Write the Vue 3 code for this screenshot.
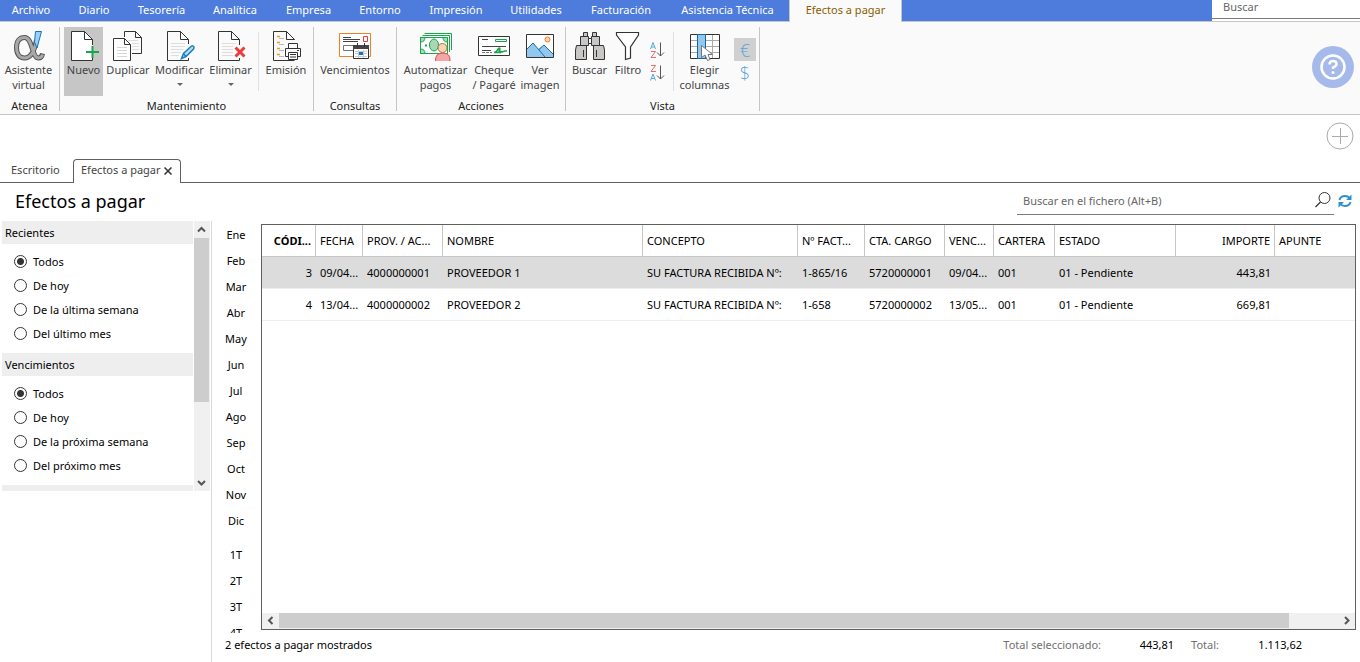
<script setup>
import { ref } from 'vue'

const menus = ['Archivo', 'Diario', 'Tesorería', 'Analítica', 'Empresa', 'Entorno', 'Impresión', 'Utilidades', 'Facturación', 'Asistencia Técnica', 'Efectos a pagar']
const activeMenu = ref('Efectos a pagar')

const filters = [
  { id: 'recientes', title: 'Recientes', options: ['Todos', 'De hoy', 'De la última semana', 'Del último mes'] },
  { id: 'vencimientos', title: 'Vencimientos', options: ['Todos', 'De hoy', 'De la próxima semana', 'Del próximo mes'] }
]
const selected = ref({ recientes: 'Todos', vencimientos: 'Todos' })

const months = ['Ene', 'Feb', 'Mar', 'Abr', 'May', 'Jun', 'Jul', 'Ago', 'Sep', 'Oct', 'Nov', 'Dic']
const quarters = ['1T', '2T', '3T', '4T']

const columns = [
  { key: 'codigo', label: 'CÓDI...' },
  { key: 'fecha', label: 'FECHA' },
  { key: 'prov', label: 'PROV. / AC...' },
  { key: 'nombre', label: 'NOMBRE' },
  { key: 'concepto', label: 'CONCEPTO' },
  { key: 'factura', label: 'Nº FACT...' },
  { key: 'cuenta', label: 'CTA. CARGO' },
  { key: 'venc', label: 'VENC...' },
  { key: 'cartera', label: 'CARTERA' },
  { key: 'estado', label: 'ESTADO' },
  { key: 'importe', label: 'IMPORTE' },
  { key: 'apunte', label: 'APUNTE' }
]
const rows = [
  { codigo: '3', fecha: '09/04...', prov: '4000000001', nombre: 'PROVEEDOR 1', concepto: 'SU FACTURA RECIBIDA Nº:', factura: '1-865/16', cuenta: '5720000001', venc: '09/04...', cartera: '001', estado: '01 - Pendiente', importe: '443,81', apunte: '' },
  { codigo: '4', fecha: '13/04...', prov: '4000000002', nombre: 'PROVEEDOR 2', concepto: 'SU FACTURA RECIBIDA Nº:', factura: '1-658', cuenta: '5720000002', venc: '13/05...', cartera: '001', estado: '01 - Pendiente', importe: '669,81', apunte: '' }
]
const selectedRow = ref('3')
</script>

<template>
  <div class="app">
    <header class="topbar">
      <nav class="menus">
        <button v-for="m in menus" :key="m" type="button" :class="{ active: m === activeMenu }" @click="activeMenu = m">{{ m }}</button>
      </nav>
      <div class="global-search">
        <input type="text" placeholder="Buscar" aria-label="Buscar">
      </div>
    </header>

    <section class="ribbon">
      <div class="group atenea">
        <div class="tools">
          <button type="button" class="tool">
            <svg width="32" height="32" viewBox="0 0 32 32">
              <g fill="none">
                <path d="M23.500 10C21.500 21 17.500 28 11.500 28C6.500 28 3.500 24 3.500 17.500C3.500 11 6.500 7.500 11.500 7.500C20 7.500 18.500 28 25.500 28C28 28 29 26.500 29.500 23.500" stroke="#555" stroke-width="5" />
                <path d="M23.500 11C21.500 21 17.500 28 11.500 28C6.500 28 3.500 24 3.500 17.500C3.500 11 6.500 7.500 11.500 7.500C20 7.500 18.500 28 25.500 28C28 28 29 26.500 29.500 24.500" stroke="#a8a8a8" stroke-width="3" />
              </g>
              <path d="M22.500 1.500H28.500L24 18L21.500 12Z" fill="#9ccff5" stroke="#1874b8" />
            </svg>
            <span>Asistente<br>virtual</span>
          </button>
        </div>
        <h2>Atenea</h2>
      </div>

      <div class="group mantenimiento">
        <div class="tools">
          <button type="button" class="tool pressed">
            <svg width="32" height="32" viewBox="0 0 32 32">
              <path d="M3.500 1.500H17L24.500 9V30.500H3.500Z" fill="#fff" />
              <path d="M24.500 15V9.500L16.500 1.500H3.500V30.500H24.500V28M16.500 1.500V9.500H24.500" fill="none" stroke="#333" />
              <path d="M24.500 16V28M18 22H31" stroke="#18a64a" stroke-width="2" />
            </svg>
            <span>Nuevo</span>
          </button>
          <button type="button" class="tool">
            <svg width="32" height="32" viewBox="0 0 32 32">
              <path d="M12.500 7V1.500H23.500L29.500 7.500V23.500H20M23.500 1.500V7.500H29.500" fill="none" stroke="#333" />
              <path d="M16 10.500H26M20 13.500H27M20 16.500H27M20 19.500H27" stroke="#ddd" />
              <path d="M1.500 8.500H12.500L18.500 14.500V30.500H1.500ZM12.500 8.500V14.500H18.500" fill="#fff" stroke="#333" />
              <path d="M5 17.500H15M5 20.500H15M5 23.500H15M5 26.500H15" stroke="#d6d6d6" />
            </svg>
            <span>Duplicar</span>
          </button>
          <button type="button" class="tool">
            <svg width="32" height="32" viewBox="0 0 32 32">
              <path d="M24.500 14V9.500L16.500 1.500H3.500V30.500H24.500V28M16.500 1.500V9.500H24.500" fill="none" stroke="#333" />
              <path d="M7 13.500H21M7 16.500H21M7 19.500H19M7 22.500H17M7 25.500H15" stroke="#ddd" />
              <path d="M17.500 28.500L19.500 23.500L27 16.500Q29 15 30 17Q30 18 29.500 19L22 26.500ZM19.500 23.500L22 26.500" fill="#b8dcf5" stroke="#1b80bd" stroke-width="1.500" />
            </svg>
            <span>Modificar</span>
            <i class="arrow"></i>
          </button>
          <button type="button" class="tool">
            <svg width="32" height="32" viewBox="0 0 32 32">
              <path d="M24.500 15V9.500L16.500 1.500H3.500V30.500H24.500V28M16.500 1.500V9.500H24.500" fill="none" stroke="#333" />
              <path d="M7 13.500H21M7 16.500H18M7 19.500H18M7 22.500H18M7 25.500H18" stroke="#ddd" />
              <path d="M20.500 17.500L29.500 26.500M29.500 17.500L20.500 26.500" stroke="#ee3a3a" stroke-width="3" />
            </svg>
            <span>Eliminar</span>
            <i class="arrow"></i>
          </button>
          <span class="divider"></span>
          <button type="button" class="tool">
            <svg width="32" height="32" viewBox="0 0 32 32">
              <path d="M24.500 10V9.500L16.500 1.500H3.500V30.500H24.500M16.500 1.500V9.500H24.500" fill="none" stroke="#333" />
              <path d="M7 6.500H10M7 12.500H10M7 18.500H10M7 24.500H10" stroke="#f39a1d" stroke-width="1.500" />
              <path d="M9 8.500H14M9 14.500H14M9 20.500H14M9 26.500H14" stroke="#bbb" />
              <path d="M18.500 18.500V13.500H27.500V18.500M18.500 26.500H15.500V18.500H30.500V26.500H27.500M18.500 22.500H27.500V29.500H18.500Z" fill="#fff" stroke="#333" />
              <path d="M20 24.500H26M20 27H26M27 20.500H29" stroke="#333" />
            </svg>
            <span>Emisión</span>
          </button>
        </div>
        <h2>Mantenimiento</h2>
      </div>

      <div class="group consultas">
        <div class="tools">
          <button type="button" class="tool">
            <svg width="34" height="32" viewBox="0 0 34 32">
              <path d="M1.500 3.500H32.500V26.500H1.500Z" fill="#fff" stroke="#ed8128" />
              <path d="M5 7.500H13M5 9.500H20M16 9.500H22M5 11.500H20" stroke="#444" />
              <path d="M25.500 6.500H29.500V11.500H25.500Z" fill="#fff" stroke="#e73c3c" />
              <path d="M5.500 15.500H15.500V20.500H5.500Z" fill="#fff" stroke="#777" />
              <path d="M15.500 15.500H30.500V28.500H15.500Z" fill="#fff" stroke="#333" />
              <path d="M15 15H31V19H15Z" fill="#444" />
              <path d="M19.500 13V17M26.500 13V17" stroke="#333" />
              <path d="M17 21.500H29M17 23.500H29M17 26.500H29M20.500 20V28M25.500 20V28" stroke="#ccc" />
              <path d="M21 22H25V25H21Z" fill="#1273c4" />
            </svg>
            <span>Vencimientos</span>
          </button>
        </div>
        <h2>Consultas</h2>
      </div>

      <div class="group acciones">
        <div class="tools">
          <button type="button" class="tool">
            <svg width="34" height="32" viewBox="0 0 34 32">
              <path d="M5.500 3.500H32.500V20M3.500 5.500H30.500V22M1.500 7.500H28.500V23.500H1.500Z" fill="#fff" stroke="#18a64a" />
              <path d="M1.500 7.500H6Q6 12 1.500 12ZM28.500 7.500H24Q24 12 28.500 12ZM1.500 23.500H6Q6 19 1.500 19Z" fill="#a9d8b5" stroke="#18a64a" />
              <ellipse cx="15" cy="15" rx="4.500" ry="6" fill="#a9d8b5" stroke="#18a64a" />
              <path d="M6 15.500H8" stroke="#18a64a" stroke-width="2" />
              <path d="M16.500 31Q16 23 24 23Q31.500 23 31 31" fill="#f4a5a5" stroke="#dd5050" />
              <circle cx="23.500" cy="18" r="4.500" fill="#f8d6b5" stroke="#a5753f" />
            </svg>
            <span>Automatizar<br>pagos</span>
          </button>
          <button type="button" class="tool">
            <svg width="34" height="32" viewBox="0 0 34 32">
              <path d="M1.500 6.500H32.500V25.500H1.500Z" fill="#fff" stroke="#333" />
              <path d="M5 9.500H11M5 16.500H29M5 20.500H14" stroke="#444" />
              <path d="M5 22.500H15" stroke="#777" stroke-dasharray="3 1" />
              <path d="M18.500 9.500H29.500V11.500H18.500Z" fill="#fff" stroke="#18a64a" />
              <path d="M17 22.500Q20 22 21 19Q23 17 23 19Q21 22 23 21L25 22L28 21H30M17 22.500H24" fill="none" stroke="#18a64a" stroke-width="1.500" />
            </svg>
            <span>Cheque<br>/ Pagaré</span>
          </button>
          <button type="button" class="tool">
            <svg width="32" height="32" viewBox="0 0 32 32">
              <path d="M2.500 4.500H29.500V27.500H2.500Z" fill="#fff" />
              <path d="M3 19L9 13L21 27H3ZM14 19L20 15L29 24V27H14Z" fill="#93c7ee" />
              <path d="M3 19L9 13L21 27M15 19.500L20 15L29 24" fill="none" stroke="#176ca9" />
              <circle cx="23.500" cy="9.500" r="2.500" fill="#ffd2a3" stroke="#ed8128" />
              <path d="M2.500 4.500H29.500V27.500H2.500Z" fill="none" stroke="#333" />
            </svg>
            <span>Ver<br>imagen</span>
          </button>
        </div>
        <h2>Acciones</h2>
      </div>

      <div class="group vista">
        <div class="tools">
          <button type="button" class="tool">
            <svg width="32" height="32" viewBox="0 0 32 32">
              <g fill="#c9c7c5" stroke="#333">
                <path d="M9.500 2.500H13.500V6.500H9.500ZM18.500 2.500H22.500V6.500H18.500Z" />
                <path d="M6.500 6.500H14.500V15.500H6.500ZM17.500 6.500H25.500V15.500H17.500Z" />
                <path d="M2.500 15.500H12.500V29.500H1.500V20ZM19.500 15.500H29.500L30.500 20V29.500H19.500Z" />
                <path d="M14.500 8.500H17.500V13.500H14.500Z" fill="#fff" />
              </g>
              <path d="M9.500 20V27M22.500 20V27" stroke="#333" />
            </svg>
            <span>Buscar</span>
          </button>
          <button type="button" class="tool">
            <svg width="32" height="32" viewBox="0 0 32 32">
              <path d="M4.500 2.500H26.500V5L18.500 17V28L13.500 29.500V17L4.500 5Z" fill="#fff" stroke="#333" stroke-width="1.200" />
            </svg>
            <span>Filtro</span>
          </button>
          <div class="stack">
            <button type="button" aria-label="Orden ascendente">
              <svg width="16" height="18" viewBox="0 0 16 18">
                <path d="M1.500 8L4 1.500L6.500 8M2.500 6H5.500" fill="none" stroke="#55a7dc" />
                <path d="M2 10.500H6.500L2 16.500H7" fill="none" stroke="#ee6b6b" />
                <path d="M11.500 1.500V15M8 11.500L11.500 15L15 11.500" fill="none" stroke="#555" />
              </svg>
            </button>
            <button type="button" aria-label="Orden descendente">
              <svg width="16" height="18" viewBox="0 0 16 18">
                <path d="M2 1.500H6.500L2 7.500H7" fill="none" stroke="#ee6b6b" />
                <path d="M1.500 16.500L4 10L6.500 16.500M2.500 14.500H5.500" fill="none" stroke="#55a7dc" />
                <path d="M11.500 1.500V15M8 11.500L11.500 15L15 11.500" fill="none" stroke="#555" />
              </svg>
            </button>
          </div>
          <span class="divider"></span>
          <button type="button" class="tool">
            <svg width="32" height="32" viewBox="0 0 32 32">
              <path d="M1.500 4.500H30.500V28.500H1.500Z" fill="#fff" />
              <path d="M2 10.500H30M2 16.500H30M2 22.500H30M23.500 5V28" stroke="#aaa" />
              <path d="M1.500 4.500H30.500V28.500H1.500Z" fill="none" stroke="#333" />
              <path d="M8.500 4.500H16.500V28.500H8.500Z" fill="#93c7ee" stroke="#1568a8" />
              <path d="M12.500 15.500V27.500L16 25L18.500 30.500L21 29.500L19 24.500H23.500Z" fill="#fff" stroke="#777" />
            </svg>
            <span>Elegir<br>columnas</span>
          </button>
          <div class="stack currency">
            <button type="button" class="pressed">€</button>
            <button type="button">$</button>
          </div>
        </div>
        <h2>Vista</h2>
      </div>

      <button type="button" class="help" aria-label="Ayuda">
        <svg width="42" height="42" viewBox="0 0 42 42">
          <circle cx="21" cy="21" r="21" fill="#a5baeb" />
          <circle cx="21" cy="21" r="11.500" fill="none" stroke="#fff" stroke-width="2.500" />
          <path d="M17.500 18.500Q17.500 15 21 15Q24.500 15 24.500 18Q24.500 20 21 21.500V23" fill="none" stroke="#fff" stroke-width="2.500" />
          <circle cx="21" cy="26.500" r="1.500" fill="#fff" />
        </svg>
      </button>
    </section>

    <div class="add-row">
      <button type="button" aria-label="Añadir">
        <svg width="28" height="28" viewBox="0 0 28 28">
          <circle cx="14" cy="14" r="13" fill="none" stroke="#aaa" />
          <path d="M14.500 6V22M6 14.500H22" stroke="#aaa" />
        </svg>
      </button>
    </div>

    <nav class="tabs">
      <a href="#" class="tab">Escritorio</a>
      <div class="tab current">
        <a href="#">Efectos a pagar</a>
        <button type="button" aria-label="Cerrar">
          <svg width="8" height="8" viewBox="0 0 8 8"><path d="M0.500 0.500L7.500 7.500M7.500 0.500L0.500 7.500" stroke="#333" stroke-width="1.500" /></svg>
        </button>
      </div>
      <span class="rule"></span>
    </nav>

    <div class="title-row">
      <h1>Efectos a pagar</h1>
      <div class="file-search">
        <input type="text" placeholder="Buscar en el fichero (Alt+B)" aria-label="Buscar en el fichero">
        <svg width="18" height="18" viewBox="0 0 18 18">
          <circle cx="10.500" cy="7" r="5.500" fill="none" stroke="#333" />
          <path d="M6.500 11L1.500 16" stroke="#333" stroke-width="1.300" />
        </svg>
      </div>
      <button type="button" class="refresh" aria-label="Actualizar">
        <svg width="14" height="14" viewBox="0 0 14 14">
          <path d="M1.500 6Q2.500 2 7 2Q10 2 11.500 4M12.500 8Q11.500 12 7 12Q4 12 2.500 10" fill="none" stroke="#2f8fce" stroke-width="2" />
          <path d="M13.500 0.500V6H8ZM0.500 13.500V8H6Z" fill="#2f8fce" />
        </svg>
      </button>
    </div>

    <main class="body">
      <aside class="sidebar">
        <div class="filters">
          <fieldset v-for="f in filters" :key="f.id">
            <legend>{{ f.title }}</legend>
            <div class="options">
              <label v-for="o in f.options" :key="o">
                <input v-model="selected[f.id]" type="radio" :name="f.id" :value="o">
                <span>{{ o }}</span>
              </label>
            </div>
          </fieldset>
          <div class="next-section"></div>
        </div>
        <div class="vscroll">
          <svg width="15" height="17" viewBox="0 0 15 17"><path d="M4 10.500L7.500 7L11 10.500" fill="none" stroke="#555" stroke-width="2" /></svg>
          <div class="thumb"></div>
          <svg width="15" height="17" viewBox="0 0 15 17"><path d="M4 7L7.500 10.500L11 7" fill="none" stroke="#555" stroke-width="2" /></svg>
        </div>
      </aside>

      <section class="content">
        <div class="work">
          <div class="periods">
            <button v-for="m in months" :key="m" type="button">{{ m }}</button>
            <div class="quarters">
              <button v-for="q in quarters" :key="q" type="button">{{ q }}</button>
            </div>
          </div>
          <div class="grid">
            <table>
              <colgroup><col v-for="c in columns" :key="c.key" :class="c.key"></colgroup>
              <thead>
                <tr><th v-for="c in columns" :key="c.key" :class="c.key">{{ c.label }}</th></tr>
              </thead>
              <tbody>
                <tr v-for="r in rows" :key="r.codigo" :class="{ selected: r.codigo === selectedRow }" @click="selectedRow = r.codigo">
                  <td v-for="c in columns" :key="c.key" :class="c.key">{{ r[c.key] }}</td>
                </tr>
              </tbody>
            </table>
            <div class="hscroll">
              <svg width="17" height="15" viewBox="0 0 17 15"><path d="M10.500 4L7 7.500L10.500 11" fill="none" stroke="#555" stroke-width="2" /></svg>
              <div class="thumb"></div>
              <svg width="17" height="15" viewBox="0 0 17 15"><path d="M7 4L10.500 7.500L7 11" fill="none" stroke="#555" stroke-width="2" /></svg>
            </div>
          </div>
        </div>
        <footer>
          <span class="count">2 efectos a pagar mostrados</span>
          <span class="muted">Total seleccionado:</span>
          <span class="amount">443,81</span>
          <span class="muted total">Total:</span>
          <span class="amount grand">1.113,62</span>
        </footer>
      </section>
    </main>
  </div>
</template>

<style>
body {
  margin: 0;
}
</style>

<style scoped>
.app {
  height: 100vh;
  display: flex;
  flex-direction: column;
  overflow: hidden;
  background: #fff;
  color: #000;
  font: 11px/15px "Noto Sans", "Open Sans", sans-serif;
}
.app * {
  box-sizing: border-box;
}
button,
input {
  font: inherit;
  color: inherit;
  background: none;
  border: 0;
  padding: 0;
  margin: 0;
}
button {
  white-space: nowrap;
}
input {
  min-width: 0;
  outline: 0;
}
input::placeholder {
  color: #666;
  opacity: 1;
}
svg {
  display: block;
  flex: none;
}
a {
  color: inherit;
  text-decoration: none;
}

.topbar {
  flex: none;
  display: flex;
  justify-content: space-between;
  height: 21px;
  background: #4d7cdc;
}
.menus {
  display: grid;
  grid-template-columns: 62px 64px 71px 76px 71px 72px 80px 80px 90px 123px 113px;
  color: #fff;
}
.menus button {
  padding-bottom: 2px;
}
.menus .active {
  background: #fafafa;
  color: #8a5d00;
  border: solid #c6c6c6;
  border-width: 0 1px;
  margin-bottom: -1px;
  padding-bottom: 3px;
  z-index: 1;
}
.global-search {
  width: 148px;
  background: #fff;
}
.global-search input {
  display: block;
  width: 100%;
  height: 19px;
  padding: 0 11px 5px;
  border-bottom: 1px solid #7a7a7a;
}

.ribbon {
  flex: none;
  display: flex;
  height: 94px;
  background: #fafafa;
  border: solid #c6c6c6;
  border-width: 1px 0;
  color: #444;
}
.group {
  display: flex;
  flex-direction: column;
  justify-content: space-between;
  margin: 5px 0 3px;
  border-right: 1px solid #c6c6c6;
}
.group h2 {
  margin: 0;
  font-size: 11px;
  line-height: 10px;
  font-weight: 400;
  color: #222;
  text-align: center;
}
.atenea { width: 60px; }
.mantenimiento { width: 254px; }
.consultas { width: 83px; }
.acciones { width: 169px; }
.vista { width: 194px; }
.tools {
  display: grid;
  height: 69px;
}
.atenea .tools { grid-template-columns: 57px; }
.mantenimiento .tools { grid-template-columns: 39px 50px 53px 49px 6px 50px; padding-left: 4px; }
.acciones .tools { grid-template-columns: 77px 40px 52px; }
.vista .tools { grid-template-columns: 47px 30px 28px 4px 59px 22px; }
.tool {
  display: flex;
  flex-direction: column;
  align-items: center;
  padding-top: 3px;
}
.tool span {
  line-height: 15px;
}
.pressed {
  background: #c6c6c6;
}
.arrow {
  margin-top: 6px;
  border: solid transparent;
  border-width: 3px 3px 0;
  border-top-color: #666;
}
.divider {
  justify-self: center;
  width: 1px;
  height: 59px;
  margin-top: 5px;
  background: #e0e0e0;
}
.stack {
  display: grid;
  grid-template-rows: 23px 23px;
  justify-items: center;
  padding-top: 11px;
  align-content: start;
}
.stack button {
  display: grid;
  place-items: center;
  width: 22px;
}
.currency {
  font: 300 18px/22px "Open Sans", "Noto Sans", sans-serif;
  color: #55a7dc;
}
.currency .pressed {
  background: #d0d0d0;
}
.help {
  margin: 24px 6px auto auto;
}

.add-row {
  flex: none;
  display: flex;
  align-items: flex-start;
  justify-content: flex-end;
  height: 44px;
  padding: 7px 6px 0;
}
.tabs {
  flex: none;
  display: flex;
  height: 24px;
  color: #444;
}
.tab {
  padding: 3px 14px 0 11px;
  border-bottom: 1px solid #606060;
}
.tabs > a {
  width: 73px;
}
.current {
  display: flex;
  align-items: flex-start;
  gap: 3px;
  width: 108px;
  padding: 2px 7px 0;
  border: 1px solid #606060;
  border-bottom: 0;
  border-radius: 4px 4px 0 0;
}
.current a {
  white-space: nowrap;
}
.current button {
  display: flex;
  align-items: center;
  height: 17px;
}
.rule {
  flex: 1;
  border-bottom: 1px solid #606060;
}

.title-row {
  flex: none;
  display: flex;
  align-items: center;
  height: 38px;
  padding: 0 8px 3px 15px;
}
h1 {
  flex: 1;
  margin: 0;
  font-size: 18px;
  line-height: 24px;
  font-weight: 400;
}
.file-search {
  display: flex;
  align-items: center;
  width: 317px;
  height: 28px;
  padding: 0 2px 0 6px;
  border-bottom: 1px solid #7a7a7a;
}
.file-search input {
  flex: 1;
}
.refresh {
  margin-left: 4px;
}

.body {
  flex: 1;
  display: flex;
  min-height: 0;
}
.sidebar {
  flex: none;
  display: flex;
  align-items: flex-start;
  width: 212px;
  padding-left: 2px;
  border-right: 1px solid #dadada;
}
.filters {
  width: 191px;
  margin-right: 1px;
}
fieldset {
  margin: 0;
  padding: 0;
  border: 0;
}
legend {
  width: 100%;
  padding: 4px 3px;
  background: #eee;
}
.options {
  display: flex;
  flex-direction: column;
  padding: 5px 12px 8px;
}
label {
  display: flex;
  align-items: center;
  gap: 6px;
  height: 24px;
}
label input {
  appearance: none;
  width: 13px;
  height: 13px;
  border: 1px solid #333;
  border-radius: 50%;
  background: #fff;
}
label input:checked {
  background: radial-gradient(circle, #333 0 3px, #fff 4px);
}
.next-section {
  height: 6px;
  background: #eee;
}
.vscroll {
  display: flex;
  flex-direction: column;
  align-self: flex-start;
  justify-content: space-between;
  width: 16px;
  height: 270px;
  background: #f0f0f0;
}
.vscroll .thumb {
  width: 15px;
  height: 164px;
  margin-bottom: auto;
  background: #cdcdcd;
}

.content {
  flex: 1;
  min-width: 0;
  display: flex;
  flex-direction: column;
}
.work {
  flex: 1;
  min-height: 0;
  display: flex;
}
.periods {
  flex: none;
  width: 49px;
  padding-right: 1px;
  overflow: hidden;
}
.periods button {
  display: block;
  width: 100%;
  height: 26px;
}
.quarters {
  margin-top: 8px;
}
.grid {
  flex: 1;
  min-width: 0;
  display: flex;
  flex-direction: column;
  justify-content: space-between;
  margin: 3px 4px 3px 0;
  border: 1px solid #606060;
}
table {
  width: 100%;
  table-layout: fixed;
  border-collapse: separate;
  border-spacing: 0;
}
col.codigo { width: 54px; }
col.fecha { width: 47px; }
col.prov { width: 80px; }
col.nombre { width: 200px; }
col.concepto { width: 155px; }
col.factura { width: 67px; }
col.cuenta { width: 80px; }
col.venc { width: 49px; }
col.cartera { width: 61px; }
col.estado { width: 121px; }
col.importe { width: 99px; }
th,
td {
  height: 32px;
  padding: 0 4px;
  font-weight: 400;
  text-align: left;
  white-space: nowrap;
  overflow: hidden;
}
th {
  border: solid #c6c6c6;
  border-width: 0 1px 1px 0;
}
th:last-child {
  border-right: 0;
}
th.codigo {
  font-weight: 700;
}
td {
  border-bottom: 1px solid #eee;
}
.codigo,
.importe {
  text-align: right;
}
.selected td {
  background: #dcdcdc;
}
.hscroll {
  display: flex;
  justify-content: space-between;
  height: 16px;
  background: #f0f0f0;
}
.hscroll .thumb {
  flex: none;
  width: calc(100% - 83px);
  height: 15px;
  margin-right: auto;
  background: #cdcdcd;
}
footer {
  flex: none;
  display: flex;
  height: 29px;
  padding: 4px 58px 0 13px;
}
.count {
  flex: 1;
}
.muted {
  color: #707070;
}
.amount {
  width: 73px;
  text-align: right;
}
.amount.grand {
  width: 83px;
}
.total {
  margin-left: 17px;
}
</style>
